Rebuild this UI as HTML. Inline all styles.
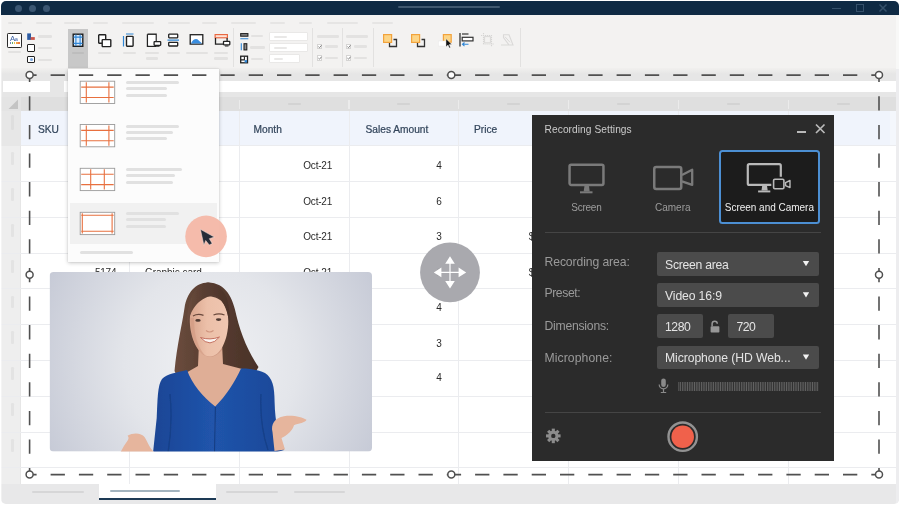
<!DOCTYPE html>
<html lang="en">
<head>
<meta charset="utf-8">
<title>Recording Settings</title>
<style>
*{box-sizing:border-box;margin:0;padding:0}
html,body{width:900px;height:505px;overflow:hidden;background:#fff}
body{font-family:"Liberation Sans",sans-serif;position:relative}
#win{position:absolute;left:1px;top:1px;width:898px;height:503px;border-radius:5px 5px 5px 5px;overflow:hidden;background:#fff;will-change:transform}
svg{overflow:visible}
</style>
</head>
<body>
<div id="win">
<!-- title bar -->
<div style="position:absolute;left:0px;top:0px;width:898px;height:14.3px;background:#0f2a44;"></div>
<div style="position:absolute;left:13.5px;top:3.5px;width:7px;height:7px;background:#3b5672;border-radius:50%"></div>
<div style="position:absolute;left:27.5px;top:3.5px;width:7px;height:7px;background:#3b5672;border-radius:50%"></div>
<div style="position:absolute;left:41.5px;top:3.5px;width:7px;height:7px;background:#3b5672;border-radius:50%"></div>
<div style="position:absolute;left:397px;top:5.3px;width:102px;height:2px;background:#40586f;border-radius:1px"></div>
<div style="position:absolute;left:831px;top:6.5px;width:8.5px;height:1.6px;background:#35506a;"></div>
<div style="position:absolute;left:855px;top:3px;width:8px;height:8px;background:transparent;border:1.5px solid #35506a"></div>
<svg style="position:absolute;left:878px;top:3px;" width="8" height="8" viewBox="0 0 8 8"><path d="M0.5 0.5L7.5 7.5M7.5 0.5L0.5 7.5" stroke="#35506a" stroke-width="1.5" fill="none"/></svg>
<!-- ribbon -->
<div style="position:absolute;left:0px;top:14px;width:898px;height:53.5px;background:#f3f2f1;"></div>
<div style="position:absolute;left:7px;top:21.1px;width:14px;height:2.4px;background:#e6e5e4;border-radius:1.2px"></div>
<div style="position:absolute;left:35px;top:21.1px;width:16px;height:2.4px;background:#e6e5e4;border-radius:1.2px"></div>
<div style="position:absolute;left:63px;top:21.1px;width:16px;height:2.4px;background:#e6e5e4;border-radius:1.2px"></div>
<div style="position:absolute;left:92px;top:21.1px;width:15px;height:2.4px;background:#e6e5e4;border-radius:1.2px"></div>
<div style="position:absolute;left:121px;top:21.1px;width:32px;height:2.4px;background:#e6e5e4;border-radius:1.2px"></div>
<div style="position:absolute;left:167px;top:21.1px;width:22px;height:2.4px;background:#e6e5e4;border-radius:1.2px"></div>
<div style="position:absolute;left:201px;top:21.1px;width:15px;height:2.4px;background:#e6e5e4;border-radius:1.2px"></div>
<div style="position:absolute;left:230px;top:21.1px;width:25px;height:2.4px;background:#e6e5e4;border-radius:1.2px"></div>
<div style="position:absolute;left:269px;top:21.1px;width:15px;height:2.4px;background:#e6e5e4;border-radius:1.2px"></div>
<div style="position:absolute;left:298px;top:21.1px;width:13px;height:2.4px;background:#e6e5e4;border-radius:1.2px"></div>
<div style="position:absolute;left:326px;top:21.1px;width:31px;height:2.4px;background:#e6e5e4;border-radius:1.2px"></div>
<div style="position:absolute;left:371px;top:21.1px;width:21px;height:2.4px;background:#e6e5e4;border-radius:1.2px"></div>
<div style="position:absolute;left:6px;top:32px;width:14.7px;height:14.7px;background:#fff;border:1.3px solid #2a2a2a;border-radius:1.2px"></div>
<div style="position:absolute;left:8.9px;top:32.52px;font-size:7.8px;line-height:9.36px;color:#3a5fa3;white-space:nowrap;letter-spacing:-0.4px">A<span style="font-size:5.6px">a</span></div>
<div style="position:absolute;left:8.5px;top:41.1px;width:1.7px;height:1.5px;background:#6f86b8;"></div>
<div style="position:absolute;left:10.65px;top:41.1px;width:1.7px;height:1.5px;background:#62b06a;"></div>
<div style="position:absolute;left:12.8px;top:41.1px;width:1.7px;height:1.5px;background:#e9c64f;"></div>
<div style="position:absolute;left:14.95px;top:41.1px;width:1.7px;height:1.5px;background:#f0a04b;"></div>
<div style="position:absolute;left:17.1px;top:41.1px;width:1.7px;height:1.5px;background:#e97c45;"></div>
<div style="position:absolute;left:7px;top:49.8px;width:13px;height:2.4px;background:#e3e2e1;border-radius:1.2px"></div>
<svg style="position:absolute;left:26px;top:32px;" width="9" height="8" viewBox="0 0 9 8"><rect x="0.2" y="0.4" width="3.8" height="6.5" fill="#2e5da3"/><rect x="3.7" y="4.1" width="4.1" height="2.8" fill="#c9564b"/></svg>
<div style="position:absolute;left:26.2px;top:43.2px;width:8px;height:8px;background:#fff;border:1.3px solid #222;border-radius:1px"></div>
<div style="position:absolute;left:26.2px;top:54.6px;width:8px;height:7.6px;background:#fff;border:1.3px solid #222;border-radius:1px"></div>
<div style="position:absolute;left:28.6px;top:56.8px;width:3.2px;height:3.2px;background:#7aa7e0;border-radius:50%"></div>
<div style="position:absolute;left:37px;top:34.3px;width:14px;height:2.4px;background:#e3e2e1;border-radius:1.2px"></div>
<div style="position:absolute;left:37px;top:45.8px;width:14px;height:2.4px;background:#e3e2e1;border-radius:1.2px"></div>
<div style="position:absolute;left:37px;top:57.5px;width:14px;height:2.4px;background:#e3e2e1;border-radius:1.2px"></div>
<div style="position:absolute;left:67px;top:28px;width:20px;height:40px;background:#c8c8c8;"></div>
<svg style="position:absolute;left:71px;top:32px;" width="12" height="14" viewBox="0 0 12 14"><g transform="translate(0.5,0.5)"><rect x="0.7" y="0.7" width="9.6" height="12.1" fill="#dbeafa" stroke="#1f1f1f" stroke-width="1.4"/><path d="M3.4 1v11.5M7.6 1v11.5M1 3.6h9M1 9.9h9" stroke="#2f86d6" stroke-width="1.1" fill="none"/></g></svg>
<div style="position:absolute;left:71px;top:50.8px;width:12px;height:2.4px;background:#bdbdbd;border-radius:1.2px"></div>
<svg style="position:absolute;left:97px;top:33px;" width="13.5" height="13.5" viewBox="0 0 13.5 13.5"><rect x="0.7" y="0.7" width="7" height="8.6" fill="#fff" stroke="#222" stroke-width="1.4" rx="0.6"/><rect x="4.2" y="5.6" width="8.6" height="7" fill="#fff" stroke="#222" stroke-width="1.4" rx="0.6"/></svg>
<div style="position:absolute;left:97px;top:50.8px;width:13px;height:2.4px;background:#e3e2e1;border-radius:1.2px"></div>
<svg style="position:absolute;left:121px;top:32px;" width="13" height="14" viewBox="0 0 13 14"><g transform="translate(0.5,0)"><path d="M3.5 1h7.5" stroke="#2f86d6" stroke-width="1.2"/><path d="M1 3v10.5" stroke="#2f86d6" stroke-width="1.2"/><rect x="4" y="3.4" width="6.6" height="9.8" fill="#fff" stroke="#222" stroke-width="1.4" rx="0.6"/></g></svg>
<div style="position:absolute;left:122px;top:50.8px;width:13px;height:2.4px;background:#e3e2e1;border-radius:1.2px"></div>
<svg style="position:absolute;left:145px;top:32px;" width="16" height="15" viewBox="0 0 16 15"><g transform="translate(0.5,0.5)"><path d="M1 0.7h8.6v8M9.6 12.8H1V0.7" fill="#fff" stroke="#222" stroke-width="1.4"/><rect x="1.7" y="1.4" width="7.2" height="10.7" fill="#fff"/><rect x="7.6" y="8.2" width="6.6" height="3.6" fill="#fff" stroke="#222" stroke-width="1.3" rx="0.5"/><path d="M9 12.6h4" stroke="#222" stroke-width="1.2"/></g></svg>
<div style="position:absolute;left:144px;top:50.8px;width:14px;height:2.4px;background:#e3e2e1;border-radius:1.2px"></div>
<div style="position:absolute;left:145px;top:56.3px;width:12px;height:2.4px;background:#e3e2e1;border-radius:1.2px"></div>
<svg style="position:absolute;left:166px;top:32px;" width="12" height="14" viewBox="0 0 12 14"><g transform="translate(0.5,0.5)"><rect x="1.2" y="0.7" width="9" height="3.6" fill="#fff" stroke="#222" stroke-width="1.3" rx="0.5"/><path d="M0 6.6h11.5" stroke="#2f86d6" stroke-width="1.2"/><rect x="1.2" y="8.9" width="9" height="3.6" fill="#fff" stroke="#222" stroke-width="1.3" rx="0.5"/></g></svg>
<div style="position:absolute;left:166px;top:50.8px;width:13px;height:2.4px;background:#e3e2e1;border-radius:1.2px"></div>
<svg style="position:absolute;left:188px;top:33px;" width="15" height="11" viewBox="0 0 15 11"><g transform="translate(0.5,0)"><rect x="0.7" y="0.7" width="12.6" height="9.4" fill="#fff" stroke="#222" stroke-width="1.3"/><path d="M1.4 9.4C3.5 5 7 4 9 6.2C10.5 7.6 11.6 8.2 12.6 9.4Z" fill="#3a8ee0"/></g></svg>
<div style="position:absolute;left:185px;top:50.8px;width:22px;height:2.4px;background:#e3e2e1;border-radius:1.2px"></div>
<svg style="position:absolute;left:213px;top:33px;" width="17" height="14" viewBox="0 0 17 14"><g transform="translate(0.5,0)"><rect x="0.6" y="0.6" width="12.3" height="3.2" fill="#fde3d8" stroke="#e8623a" stroke-width="1.1"/><path d="M1 4v6.2h8" fill="none" stroke="#222" stroke-width="1.3"/><path d="M12.6 4v3" stroke="#222" stroke-width="1.3"/><rect x="9" y="7.4" width="6.3" height="3.4" fill="#fff" stroke="#222" stroke-width="1.3" rx="0.5"/><path d="M10.4 12h3.6" stroke="#222" stroke-width="1.2"/></g></svg>
<div style="position:absolute;left:213px;top:50.8px;width:14px;height:2.4px;background:#e3e2e1;border-radius:1.2px"></div>
<div style="position:absolute;left:213px;top:56.3px;width:14px;height:2.4px;background:#e3e2e1;border-radius:1.2px"></div>
<div style="position:absolute;left:232px;top:27px;width:1px;height:39px;background:#e2e1e0;"></div>
<div style="position:absolute;left:311px;top:27px;width:1px;height:39px;background:#e2e1e0;"></div>
<div style="position:absolute;left:341px;top:27px;width:1px;height:39px;background:#e2e1e0;"></div>
<div style="position:absolute;left:372px;top:27px;width:1px;height:39px;background:#e2e1e0;"></div>
<div style="position:absolute;left:519px;top:27px;width:1px;height:39px;background:#e2e1e0;"></div>
<svg style="position:absolute;left:239px;top:32px;" width="9" height="7" viewBox="0 0 9 7"><rect x="0.7" y="0.6" width="7.2" height="2.6" fill="#8a8a8a" stroke="#222" stroke-width="1.1"/><path d="M0.3 5.8h8" stroke="#2f86d6" stroke-width="1.1"/></svg>
<svg style="position:absolute;left:239px;top:42px;" width="9" height="8" viewBox="0 0 9 8"><path d="M1.3 0.3v7" stroke="#2f86d6" stroke-width="1.1"/><rect x="4" y="0.7" width="2.8" height="6.2" fill="#8a8a8a" stroke="#222" stroke-width="1.1"/></svg>
<svg style="position:absolute;left:239px;top:54px;" width="9" height="9" viewBox="0 0 9 9"><g transform="translate(0,0.5)"><rect x="0.7" y="0.7" width="6.8" height="6.6" fill="#fff" stroke="#222" stroke-width="1.3"/><path d="M1 4.4h3.4V1" stroke="#222" stroke-width="1.1" fill="none"/><rect x="4.6" y="4.6" width="2.5" height="2.4" fill="#2f86d6"/></g></svg>
<div style="position:absolute;left:250px;top:33.8px;width:12px;height:2.4px;background:#e3e2e1;border-radius:1.2px"></div>
<div style="position:absolute;left:249px;top:45.3px;width:15px;height:2.4px;background:#e3e2e1;border-radius:1.2px"></div>
<div style="position:absolute;left:250px;top:56.5px;width:12px;height:2.4px;background:#e3e2e1;border-radius:1.2px"></div>
<div style="position:absolute;left:268.3px;top:31.2px;width:38.3px;height:8.9px;background:#fff;border:1px solid #e9e8e7;border-radius:1px"></div>
<div style="position:absolute;left:272.8px;top:34.95px;width:13px;height:2px;background:#e9e8e7;border-radius:1px"></div>
<div style="position:absolute;left:268.3px;top:41.9px;width:38.3px;height:9.6px;background:#fff;border:1px solid #e9e8e7;border-radius:1px"></div>
<div style="position:absolute;left:272.8px;top:46px;width:13px;height:2px;background:#e9e8e7;border-radius:1px"></div>
<div style="position:absolute;left:268.3px;top:53.3px;width:30.5px;height:9px;background:#fff;border:1px solid #e9e8e7;border-radius:1px"></div>
<div style="position:absolute;left:272.8px;top:57.1px;width:9px;height:2px;background:#e9e8e7;border-radius:1px"></div>
<div style="position:absolute;left:316px;top:34.3px;width:22px;height:2.4px;background:#e3e2e1;border-radius:1.2px"></div>
<div style="position:absolute;left:316px;top:42.8px;width:5.4px;height:5.4px;background:#fff;border:0.8px solid #d5d4d3"></div>
<svg style="position:absolute;left:317px;top:43px;" width="4" height="5" viewBox="0 0 4 5"><g transform="translate(0,0.7)"><path d="M0.4 1.9L1.5 3L3.5 0.6" stroke="#666" stroke-width="0.8" fill="none"/></g></svg>
<div style="position:absolute;left:324px;top:44.3px;width:13px;height:2.4px;background:#e3e2e1;border-radius:1.2px"></div>
<div style="position:absolute;left:316px;top:54.3px;width:5.4px;height:5.4px;background:#fff;border:0.8px solid #d5d4d3"></div>
<svg style="position:absolute;left:317px;top:55px;" width="4" height="5" viewBox="0 0 4 5"><g transform="translate(0,0.2)"><path d="M0.4 1.9L1.5 3L3.5 0.6" stroke="#666" stroke-width="0.8" fill="none"/></g></svg>
<div style="position:absolute;left:324px;top:55.8px;width:13px;height:2.4px;background:#e3e2e1;border-radius:1.2px"></div>
<div style="position:absolute;left:345px;top:34.3px;width:22px;height:2.4px;background:#e3e2e1;border-radius:1.2px"></div>
<div style="position:absolute;left:345px;top:42.8px;width:5.4px;height:5.4px;background:#fff;border:0.8px solid #d5d4d3"></div>
<svg style="position:absolute;left:346px;top:43px;" width="4" height="5" viewBox="0 0 4 5"><g transform="translate(0,0.7)"><path d="M0.4 1.9L1.5 3L3.5 0.6" stroke="#666" stroke-width="0.8" fill="none"/></g></svg>
<div style="position:absolute;left:353px;top:44.3px;width:13px;height:2.4px;background:#e3e2e1;border-radius:1.2px"></div>
<div style="position:absolute;left:345px;top:54.3px;width:5.4px;height:5.4px;background:#fff;border:0.8px solid #d5d4d3"></div>
<svg style="position:absolute;left:346px;top:55px;" width="4" height="5" viewBox="0 0 4 5"><g transform="translate(0,0.2)"><path d="M0.4 1.9L1.5 3L3.5 0.6" stroke="#666" stroke-width="0.8" fill="none"/></g></svg>
<div style="position:absolute;left:353px;top:55.8px;width:13px;height:2.4px;background:#e3e2e1;border-radius:1.2px"></div>
<svg style="position:absolute;left:382px;top:33px;" width="14.5" height="13.5" viewBox="0 0 14.5 13.5"><path d="M6.5 7.5v5h7v-7h-3" fill="none" stroke="#333" stroke-width="1.3"/><rect x="0.6" y="0.6" width="8" height="7.8" fill="#fcd587" stroke="#f2a33c" stroke-width="1.2"/></svg>
<svg style="position:absolute;left:410px;top:33px;" width="14.5" height="13.5" viewBox="0 0 14.5 13.5"><path d="M6.5 7.5v5h7v-7h-3" fill="none" stroke="#333" stroke-width="1.3"/><rect x="0.6" y="0.6" width="8" height="7.8" fill="#fcd587" stroke="#f2a33c" stroke-width="1.2"/></svg>
<svg style="position:absolute;left:437px;top:33px;" width="15" height="14" viewBox="0 0 15 14"><rect x="5.4" y="0.6" width="7.8" height="7.6" fill="#fcd587" stroke="#f2a33c" stroke-width="1.2"/><rect x="0.3" y="7" width="7.5" height="5" fill="#fff" stroke="#e8e8e8" stroke-width="0.5"/><path d="M8 4.8v8l2-1.8l1.3 3l1.2-0.5l-1.3-2.9l2.6-0.2Z" fill="#111" stroke="#fff" stroke-width="0.4"/></svg>
<svg style="position:absolute;left:458px;top:32px;" width="15" height="14" viewBox="0 0 15 14"><path d="M1 0v13.5" stroke="#333" stroke-width="1.3"/><path d="M3 1h6.5" stroke="#333" stroke-width="1.2"/><rect x="3.2" y="4.3" width="10.8" height="3.6" fill="#fff" stroke="#333" stroke-width="1.2"/><path d="M9.5 11.3h-6m2-1.8l-2 1.8l2 1.8" stroke="#2f86d6" stroke-width="1.1" fill="none"/></svg>
<svg style="position:absolute;left:480px;top:32px;" width="13" height="14" viewBox="0 0 13 14"><path d="M2.5 0v11h10.5M0 2.5h10.5v11" stroke="#d6d5d4" stroke-width="1.1" fill="none" stroke-dasharray="1.2 0.8"/><rect x="3.6" y="3.6" width="5.8" height="6.2" fill="none" stroke="#dad9d8" stroke-width="1"/></svg>
<svg style="position:absolute;left:499px;top:33px;" width="14" height="12" viewBox="0 0 14 12"><path d="M1 11h8L3.5 3.5V0.8h5.5l4 10.2H9" stroke="#dad9d8" stroke-width="1.1" fill="none"/><path d="M5 2.8l5 5.5" stroke="#dad9d8" stroke-width="1"/></svg>
<!-- formula bar / headers -->
<div style="position:absolute;left:0px;top:66.8px;width:898px;height:29.2px;background:#e7e7e7;background:linear-gradient(#f1f0ef 0,#e6e6e6 6px,#e6e6e6 100%)"></div>
<div style="position:absolute;left:2px;top:80px;width:47px;height:10.7px;background:#fff;"></div>
<div style="position:absolute;left:63px;top:80px;width:832px;height:10.7px;background:#fff;"></div>
<div style="position:absolute;left:0px;top:95.5px;width:898px;height:14px;background:#dfdfdf;"></div>
<div style="position:absolute;left:0px;top:95.5px;width:19.5px;height:14px;background:#e4e4e4;"></div>
<svg style="position:absolute;left:7px;top:98px;" width="11" height="10" viewBox="0 0 11 10"><g transform="translate(0.5,0.5)"><path d="M9.5 0V9.5H0Z" fill="#c4c4c4"/></g></svg>
<div style="position:absolute;left:67px;top:102.2px;width:13px;height:1.6px;background:#d3d3d3;border-radius:0.8px"></div>
<div style="position:absolute;left:127.9px;top:98.5px;width:1.2px;height:9px;background:#ebebeb;"></div>
<div style="position:absolute;left:176.5px;top:102.2px;width:13px;height:1.6px;background:#d3d3d3;border-radius:0.8px"></div>
<div style="position:absolute;left:237.9px;top:98.5px;width:1.2px;height:9px;background:#ebebeb;"></div>
<div style="position:absolute;left:286.5px;top:102.2px;width:13px;height:1.6px;background:#d3d3d3;border-radius:0.8px"></div>
<div style="position:absolute;left:347.4px;top:98.5px;width:1.2px;height:9px;background:#ebebeb;"></div>
<div style="position:absolute;left:396px;top:102.2px;width:13px;height:1.6px;background:#d3d3d3;border-radius:0.8px"></div>
<div style="position:absolute;left:457.1px;top:98.5px;width:1.2px;height:9px;background:#ebebeb;"></div>
<div style="position:absolute;left:505.7px;top:102.2px;width:13px;height:1.6px;background:#d3d3d3;border-radius:0.8px"></div>
<div style="position:absolute;left:566.9px;top:98.5px;width:1.2px;height:9px;background:#ebebeb;"></div>
<div style="position:absolute;left:615.5px;top:102.2px;width:13px;height:1.6px;background:#d3d3d3;border-radius:0.8px"></div>
<div style="position:absolute;left:676.9px;top:98.5px;width:1.2px;height:9px;background:#ebebeb;"></div>
<div style="position:absolute;left:725.5px;top:102.2px;width:13px;height:1.6px;background:#d3d3d3;border-radius:0.8px"></div>
<div style="position:absolute;left:786.9px;top:98.5px;width:1.2px;height:9px;background:#ebebeb;"></div>
<div style="position:absolute;left:835.5px;top:102.2px;width:13px;height:1.6px;background:#d3d3d3;border-radius:0.8px"></div>
<!-- sheet -->
<div style="position:absolute;left:0px;top:109.5px;width:19.5px;height:373.5px;background:#eeeeee;"></div>
<div style="position:absolute;left:19.5px;top:109.5px;width:869px;height:35px;background:#f0f4fc;"></div>
<div style="position:absolute;left:888.5px;top:109.5px;width:7px;height:35px;background:#f4f7fc;"></div>
<div style="position:absolute;left:128px;top:109.5px;width:1px;height:373.5px;background:#ebecef;"></div>
<div style="position:absolute;left:238px;top:109.5px;width:1px;height:373.5px;background:#ebecef;"></div>
<div style="position:absolute;left:347.5px;top:109.5px;width:1px;height:373.5px;background:#ebecef;"></div>
<div style="position:absolute;left:457.2px;top:109.5px;width:1px;height:373.5px;background:#ebecef;"></div>
<div style="position:absolute;left:567px;top:109.5px;width:1px;height:373.5px;background:#ebecef;"></div>
<div style="position:absolute;left:677px;top:109.5px;width:1px;height:373.5px;background:#ebecef;"></div>
<div style="position:absolute;left:787px;top:109.5px;width:1px;height:373.5px;background:#ebecef;"></div>
<div style="position:absolute;left:19px;top:109.5px;width:1px;height:373.5px;background:#e6e6e6;"></div>
<div style="position:absolute;left:0px;top:144.1px;width:896px;height:1px;background:#ebecef;"></div>
<div style="position:absolute;left:0px;top:179.9px;width:896px;height:1px;background:#ebecef;"></div>
<div style="position:absolute;left:0px;top:215.7px;width:896px;height:1px;background:#ebecef;"></div>
<div style="position:absolute;left:0px;top:251.5px;width:896px;height:1px;background:#ebecef;"></div>
<div style="position:absolute;left:0px;top:287.3px;width:896px;height:1px;background:#ebecef;"></div>
<div style="position:absolute;left:0px;top:323.1px;width:896px;height:1px;background:#ebecef;"></div>
<div style="position:absolute;left:0px;top:358.9px;width:896px;height:1px;background:#ebecef;"></div>
<div style="position:absolute;left:0px;top:394.7px;width:896px;height:1px;background:#ebecef;"></div>
<div style="position:absolute;left:0px;top:430.5px;width:896px;height:1px;background:#ebecef;"></div>
<div style="position:absolute;left:0px;top:466.3px;width:896px;height:1px;background:#ebecef;"></div>
<div style="position:absolute;left:0px;top:109.5px;width:19.5px;height:35px;background:#e7e7e7;"></div>
<div style="position:absolute;left:10.2px;top:114px;width:2.4px;height:15px;background:#dedede;border-radius:1.2px"></div>
<div style="position:absolute;left:10.2px;top:151.4px;width:2.4px;height:12.8px;background:#e3e3e3;border-radius:1.2px"></div>
<div style="position:absolute;left:10.2px;top:187.2px;width:2.4px;height:12.8px;background:#e3e3e3;border-radius:1.2px"></div>
<div style="position:absolute;left:10.2px;top:223px;width:2.4px;height:12.8px;background:#e3e3e3;border-radius:1.2px"></div>
<div style="position:absolute;left:10.2px;top:258.8px;width:2.4px;height:12.8px;background:#e3e3e3;border-radius:1.2px"></div>
<div style="position:absolute;left:10.2px;top:294.6px;width:2.4px;height:12.8px;background:#e3e3e3;border-radius:1.2px"></div>
<div style="position:absolute;left:10.2px;top:330.4px;width:2.4px;height:12.8px;background:#e3e3e3;border-radius:1.2px"></div>
<div style="position:absolute;left:10.2px;top:366.2px;width:2.4px;height:12.8px;background:#e3e3e3;border-radius:1.2px"></div>
<div style="position:absolute;left:10.2px;top:402px;width:2.4px;height:12.8px;background:#e3e3e3;border-radius:1.2px"></div>
<div style="position:absolute;left:10.2px;top:437.8px;width:2.4px;height:12.8px;background:#e3e3e3;border-radius:1.2px"></div>
<div style="position:absolute;left:37px;top:123.28px;font-size:10.2px;line-height:12.24px;color:#34465c;-webkit-text-stroke:0.22px #34465c;white-space:nowrap;">SKU</div>
<div style="position:absolute;left:252.5px;top:123.28px;font-size:10.2px;line-height:12.24px;color:#34465c;-webkit-text-stroke:0.22px #34465c;white-space:nowrap;">Month</div>
<div style="position:absolute;left:364.5px;top:123.28px;font-size:10.2px;line-height:12.24px;color:#34465c;-webkit-text-stroke:0.22px #34465c;white-space:nowrap;">Sales Amount</div>
<div style="position:absolute;left:473px;top:123.28px;font-size:10.2px;line-height:12.24px;color:#34465c;-webkit-text-stroke:0.22px #34465c;white-space:nowrap;">Price</div>
<div style="position:absolute;right:567px;top:158.9px;font-size:10px;line-height:12px;color:#2a2a2a;letter-spacing:-0.22px;white-space:nowrap;">Oct-21</div>
<div style="position:absolute;right:567px;top:194.5px;font-size:10px;line-height:12px;color:#2a2a2a;letter-spacing:-0.22px;white-space:nowrap;">Oct-21</div>
<div style="position:absolute;right:567px;top:230.1px;font-size:10px;line-height:12px;color:#2a2a2a;letter-spacing:-0.22px;white-space:nowrap;">Oct-21</div>
<div style="position:absolute;right:567px;top:265.6px;font-size:10px;line-height:12px;color:#2a2a2a;letter-spacing:-0.22px;white-space:nowrap;">Oct-21</div>
<div style="position:absolute;right:457.5px;top:158.9px;font-size:10px;line-height:12px;color:#2a2a2a;letter-spacing:-0.22px;white-space:nowrap;">4</div>
<div style="position:absolute;right:457.5px;top:194.5px;font-size:10px;line-height:12px;color:#2a2a2a;letter-spacing:-0.22px;white-space:nowrap;">6</div>
<div style="position:absolute;right:457.5px;top:230.1px;font-size:10px;line-height:12px;color:#2a2a2a;letter-spacing:-0.22px;white-space:nowrap;">3</div>
<div style="position:absolute;right:457.5px;top:265.6px;font-size:10px;line-height:12px;color:#2a2a2a;letter-spacing:-0.22px;white-space:nowrap;">2</div>
<div style="position:absolute;right:457.5px;top:300.9px;font-size:10px;line-height:12px;color:#2a2a2a;letter-spacing:-0.22px;white-space:nowrap;">4</div>
<div style="position:absolute;right:457.5px;top:336.6px;font-size:10px;line-height:12px;color:#2a2a2a;letter-spacing:-0.22px;white-space:nowrap;">3</div>
<div style="position:absolute;right:457.5px;top:371.4px;font-size:10px;line-height:12px;color:#2a2a2a;letter-spacing:-0.22px;white-space:nowrap;">4</div>
<div style="position:absolute;right:349px;top:230.1px;font-size:10px;line-height:12px;color:#2a2a2a;letter-spacing:-0.22px;white-space:nowrap;">$120</div>
<div style="position:absolute;right:349px;top:265.6px;font-size:10px;line-height:12px;color:#2a2a2a;letter-spacing:-0.22px;white-space:nowrap;">$340</div>
<div style="position:absolute;right:782.7px;top:265.6px;font-size:10px;line-height:12px;color:#2a2a2a;letter-spacing:-0.22px;white-space:nowrap;">5174</div>
<div style="position:absolute;left:144px;top:265.6px;font-size:10px;line-height:12px;color:#2a2a2a;letter-spacing:-0.04px;white-space:nowrap;">Graphic card</div>
<!-- tabs -->
<div style="position:absolute;left:0px;top:483px;width:898px;height:20px;background:#e8e8e9;"></div>
<div style="position:absolute;left:895.4px;top:14.5px;width:2.6px;height:53px;background:#f8f8f7;"></div>
<div style="position:absolute;left:895.4px;top:67.5px;width:2.6px;height:436px;background:#ededef;"></div>
<div style="position:absolute;left:0px;top:14.5px;width:1.2px;height:489px;background:rgba(255,255,255,0.35);"></div>
<div style="position:absolute;left:98.3px;top:483px;width:116.7px;height:15.8px;background:#fff;border-bottom:2px solid #1d3a55"></div>
<div style="position:absolute;left:109px;top:489.4px;width:70px;height:2px;background:#a3b4bf;border-radius:1px"></div>
<div style="position:absolute;left:31px;top:489.6px;width:52px;height:2px;background:#d6d6d7;border-radius:1px"></div>
<div style="position:absolute;left:225px;top:489.6px;width:52px;height:2px;background:#d6d6d7;border-radius:1px"></div>
<div style="position:absolute;left:293px;top:489.6px;width:51px;height:2px;background:#d6d6d7;border-radius:1px"></div>
<!-- dropdown -->
<div style="position:absolute;left:67.3px;top:67.8px;width:151.2px;height:193px;background:#fcfcfc;box-shadow:0 1px 4px rgba(0,0,0,0.22),0 0 1px rgba(0,0,0,0.15)"></div>
<div style="position:absolute;left:69.4px;top:201.5px;width:147px;height:41.3px;background:#f1f1f1;"></div>
<svg style="position:absolute;left:78px;top:79px;" width="37" height="24" viewBox="0 0 37 24"><g transform="translate(0.7,0.7)"><rect x="0.5" y="0.5" width="34.5" height="22.3" fill="#fff" stroke="#9a9a9a" stroke-width="0.9"/><path d="M6.6 1.5V21.8M29.2 1.5V21.8M1.5 6.4H34M1.5 16.8H34" stroke="#e8703f" stroke-width="1.1" fill="none"/></g></svg>
<svg style="position:absolute;left:78px;top:123px;" width="37" height="24" viewBox="0 0 37 24"><g transform="translate(0.7,0)"><rect x="0.5" y="0.5" width="34.5" height="22.3" fill="#fff" stroke="#9a9a9a" stroke-width="0.9"/><path d="M6.6 1.5V21.8M29.2 1.5V21.8M1.5 6.4H34M1.5 16.8H34" stroke="#e8703f" stroke-width="1.1" fill="none"/></g></svg>
<svg style="position:absolute;left:78px;top:166px;" width="37" height="25" viewBox="0 0 37 25"><g transform="translate(0.7,0.8)"><rect x="0.5" y="0.5" width="34.5" height="22.3" fill="#fff" stroke="#9a9a9a" stroke-width="0.9"/><path d="M11 1.5V21.8M24.6 1.5V21.8M1.5 6.4H34M1.5 16.8H34" stroke="#e8703f" stroke-width="1.1" fill="none"/></g></svg>
<svg style="position:absolute;left:78px;top:210px;" width="37" height="25" viewBox="0 0 37 25"><g transform="translate(0.7,0.8)"><rect x="0.5" y="0.5" width="34.5" height="22.3" fill="#fff" stroke="#9a9a9a" stroke-width="0.9"/><path d="M2.6 1.5V21.8M32.4 1.5V21.8M1.5 3.4H34M1.5 19.4H34" stroke="#e8703f" stroke-width="1.1" fill="none"/></g></svg>
<div style="position:absolute;left:125px;top:79.8px;width:53px;height:3px;background:#e1e1e1;border-radius:1.5px"></div>
<div style="position:absolute;left:125px;top:86.2px;width:41px;height:3px;background:#e1e1e1;border-radius:1.5px"></div>
<div style="position:absolute;left:125px;top:92.6px;width:41px;height:3px;background:#e1e1e1;border-radius:1.5px"></div>
<div style="position:absolute;left:125px;top:123.5px;width:53px;height:3px;background:#e1e1e1;border-radius:1.5px"></div>
<div style="position:absolute;left:125px;top:129.9px;width:47px;height:3px;background:#e1e1e1;border-radius:1.5px"></div>
<div style="position:absolute;left:125px;top:136.3px;width:41px;height:3px;background:#e1e1e1;border-radius:1.5px"></div>
<div style="position:absolute;left:125px;top:167px;width:55.5px;height:3px;background:#e1e1e1;border-radius:1.5px"></div>
<div style="position:absolute;left:125px;top:173.4px;width:48.5px;height:3px;background:#e1e1e1;border-radius:1.5px"></div>
<div style="position:absolute;left:125px;top:179.8px;width:47px;height:3px;background:#e1e1e1;border-radius:1.5px"></div>
<div style="position:absolute;left:125px;top:210.8px;width:53px;height:3px;background:#e1e1e1;border-radius:1.5px"></div>
<div style="position:absolute;left:125px;top:217.2px;width:40px;height:3px;background:#e1e1e1;border-radius:1.5px"></div>
<div style="position:absolute;left:125px;top:223.6px;width:40px;height:3px;background:#e1e1e1;border-radius:1.5px"></div>
<div style="position:absolute;left:79px;top:250.2px;width:53px;height:3px;background:#e1e1e1;border-radius:1.5px"></div>
<!-- webcam -->
<svg style="position:absolute;left:48px;top:271px;" width="323" height="180" viewBox="0 0 323 180"><g transform="translate(0.6,0)"><defs><radialGradient id="wbg" cx="0.5" cy="0.5" r="0.6" gradientTransform="translate(0 -0.45) scale(1 1.9)"><stop offset="0" stop-color="#f0f1f4"/><stop offset="0.45" stop-color="#e3e5ea"/><stop offset="1" stop-color="#c3c7d4"/></radialGradient><linearGradient id="shirt" x1="0" x2="1"><stop offset="0" stop-color="#1a4595"/><stop offset="0.45" stop-color="#2054ab"/><stop offset="1" stop-color="#1b4898"/></linearGradient><linearGradient id="hair" x1="0" x2="1"><stop offset="0" stop-color="#6b4c3d"/><stop offset="0.35" stop-color="#5a3f33"/><stop offset="1" stop-color="#4a3228"/></linearGradient><linearGradient id="skin" x1="0" x2="1"><stop offset="0" stop-color="#d9a58d"/><stop offset="0.45" stop-color="#ecc0a9"/><stop offset="1" stop-color="#efc6b0"/></linearGradient><filter id="soft" x="-5%" y="-5%" width="110%" height="110%"><feGaussianBlur stdDeviation="0.45"/></filter><clipPath id="wclip"><rect x="0" y="0" width="322.4" height="179.6" rx="4"/></clipPath></defs><g clip-path="url(#wclip)"><rect width="322.4" height="179.6" fill="url(#wbg)"/><g filter="url(#soft)"><path d="M158.4 10.6C145.4 11.0 137.4 21.0 134.9 36.0C131.9 56.0 127.4 73.0 124.9 99.0L130.4 110.0L200.4 110.0L208.9 95.0C199.4 81.0 191.4 63.0 186.9 44.0C183.4 26.0 176.4 11.0 158.4 10.6Z" fill="url(#hair)"/><path d="M149.4 71.0L148.4 94.0L134.4 102.0L166.4 140.0L196.4 98.0L173.4 92.0L172.4 71.0Z" fill="#dfae96"/><path d="M149.4 78.0Q160.4 92.0 172.4 78.0L172.4 71.0L149.4 71.0Z" fill="#cf9a83"/><path d="M159.4 24.5C146.4 24.5 139.9 34.0 140.2 50.0C140.9 68.0 149.4 84.5 160.4 84.5C170.4 84.5 178.7 68.0 178.7 49.0C178.7 34.0 171.4 24.5 159.4 24.5Z" fill="url(#skin)"/><path d="M140.9 46.0C140.9 66.0 147.4 80.0 155.4 83.5C147.4 74.0 144.4 62.0 144.4 46.0Z" fill="#cf9780" opacity="0.55"/><path d="M158.4 10.6C144.4 13.0 137.9 28.0 137.4 54.0C140.9 38.0 147.4 27.0 163.9 23.0C171.4 25.0 177.4 34.0 179.9 52.0C181.4 28.0 174.4 12.0 158.4 10.6Z" fill="url(#hair)"/><ellipse cx="148.4" cy="48.39999999999998" rx="2.7" ry="1.4" fill="#4f3a33"/><ellipse cx="169.0" cy="47.60000000000002" rx="2.7" ry="1.4" fill="#4f3a33"/><path d="M143.4 44.0Q148.4 41.2 153.9 43.4M163.9 43.0Q169.4 40.6 174.9 43.0" stroke="#6b4a3c" stroke-width="1.3" fill="none"/><path d="M150.9 65.5Q160.4 76.5 169.9 65.0Q160.4 68.5 150.9 65.5Z" fill="#fbf3ef" stroke="#c4705f" stroke-width="1"/><path d="M156.4 58.5Q159.9 61.5 163.9 58.5" stroke="#cf957f" stroke-width="1.1" fill="none"/><path d="M137.4 98.0C126.4 100.5 117.4 102.0 112.4 107.0C107.9 113.0 108.0 128.0 107.1 146.0L103.4 181.0L224.4 181.0L234.4 178.0C229.4 168.0 225.4 150.0 225.0 130.0C224.9 114.0 222.9 106.0 215.4 101.0C207.4 97.5 198.4 96.5 191.4 96.6C185.4 110.0 176.4 124.0 165.6 134.5C153.4 125.0 142.4 112.0 137.4 98.0Z" fill="url(#shirt)"/><path d="M165.8 135.0L164.9 181.0" stroke="#163c80" stroke-width="1"/><path d="M120.4 122.0C122.4 143.0 121.4 163.0 118.4 181.0M211.4 122.0C210.4 143.0 212.4 160.0 218.4 178.0" stroke="#163d84" stroke-width="1.4" fill="none" opacity="0.8"/><path d="M222.9 160.0C220.9 152.0 225.4 145.5 234.4 144.2C243.4 142.8 252.4 145.0 256.9 147.8C256.4 150.8 248.4 151.3 244.4 153.3C242.9 159.0 237.4 163.5 231.9 166.0L235.4 177.5L224.9 179.0Z" fill="#e6b59d"/><path d="M72.4 177.5C75.4 171.0 81.4 166.5 77.9 163.7C83.9 160.3 91.9 161.0 94.9 165.0C98.4 170.0 99.4 176.0 105.4 181.0L70.4 181.0Z" fill="#e6b59d"/></g></g></g></svg>
<!-- move handle + click highlight -->
<svg style="position:absolute;left:419px;top:241px;" width="60" height="61" viewBox="0 0 60 61"><g transform="translate(0,0.4)"><circle cx="30" cy="30" r="29.9" fill="#a6a6ab" fill-opacity="0.96"/><g fill="#fff" transform="translate(30,30)"><g transform="rotate(0)"><path d="M0 -16.2L-4.8 -8.6H-0.6V0H0.6V-8.6H4.8Z"/></g><g transform="rotate(90)"><path d="M0 -16.2L-4.8 -8.6H-0.6V0H0.6V-8.6H4.8Z"/></g><g transform="rotate(180)"><path d="M0 -16.2L-4.8 -8.6H-0.6V0H0.6V-8.6H4.8Z"/></g><g transform="rotate(270)"><path d="M0 -16.2L-4.8 -8.6H-0.6V0H0.6V-8.6H4.8Z"/></g></g></g></svg>
<svg style="position:absolute;left:184px;top:214px;" width="42" height="42" viewBox="0 0 42 42"><circle cx="21.06" cy="21.4" r="20.8" fill="#f4b7a6" fill-opacity="0.95"/><path d="M15.4 14.3L18.9 30.2L20.7 25.5L24.3 30L27.2 28.4L24.3 23.7L29.3 22.1Z" fill="#262c38" stroke="#fbe9e2" stroke-width="0.5" stroke-linejoin="round"/></svg>
<!-- recording settings panel -->
<div style="position:absolute;left:531px;top:113px;width:301.6px;height:347px;background:transparent;font-family:'Liberation Sans',sans-serif"><div style="position:absolute;left:0px;top:0.7px;width:301.6px;height:346.3px;background:#2b2b2b;"></div><div style="position:absolute;left:12.6px;top:10px;font-size:10.2px;line-height:12.24px;color:#cbcbcb;white-space:nowrap;letter-spacing:0.06px">Recording Settings</div><div style="position:absolute;left:265px;top:17.2px;width:9px;height:1.6px;background:#b9b9b9;"></div><svg style="position:absolute;left:283px;top:9px" width="11" height="11" viewBox="0 0 11 11"><g transform="translate(0,0.5)"><path d="M1 1L9.5 9.500M9.5 1L1 9.5" stroke="#b9b9b9" stroke-width="1.7" fill="none"/></g></svg><svg style="position:absolute;left:35px;top:47px" width="39" height="34" viewBox="0 0 39 34"><g transform="translate(0,0.4)"><rect x="2.55" y="3.35" width="33.9" height="20.2" rx="1.6" fill="none" stroke="#7a7a7a" stroke-width="2.5"/><path d="M17.5 24h4.4l0.8 6h-6z" fill="#7a7a7a"/><rect x="13" y="29.9" width="12.5" height="2" fill="#7a7a7a"/></g></svg><div style="position:absolute;left:39.3px;top:88px;font-size:10px;line-height:12px;color:#9c9c9c;white-space:nowrap;letter-spacing:-0.25px">Screen</div><svg style="position:absolute;left:121px;top:51px" width="41" height="26" viewBox="0 0 41 26"><rect x="1.25" y="1.95" width="27" height="22" rx="2" fill="none" stroke="#7a7a7a" stroke-width="2.5"/><path d="M29 10L39.2 4.800V19.900L29 16.3" fill="none" stroke="#7a7a7a" stroke-width="2.3" stroke-linejoin="round"/></svg><div style="position:absolute;left:123px;top:88px;font-size:10px;line-height:12px;color:#9c9c9c;white-space:nowrap;">Camera</div><div style="position:absolute;left:186.5px;top:36px;width:101.5px;height:73.9px;background:#1c1c1c;border:2px solid #4c8fd3;border-radius:3.5px"></div><svg style="position:absolute;left:213px;top:48px" width="47" height="33" viewBox="0 0 47 33"><g transform="translate(0.8,0.2)"><path d="M25.5 22.7H3.5a1.5 1.5 0 0 1-1.5-1.5V3.5A1.5 1.5 0 0 1 3.5 2H33.5a1.5 1.5 0 0 1 1.5 1.5V14.5" fill="none" stroke="#b9b9b9" stroke-width="2.2"/><path d="M16.4 23.5h4.8l0.7 4.9h-6.200z" fill="#b9b9b9"/><rect x="12.3" y="28.3" width="12.2" height="1.9" fill="#b9b9b9"/><rect x="27.8" y="17" width="10.3" height="9.5" rx="1.2" fill="none" stroke="#b9b9b9" stroke-width="1.6"/><path d="M39.8 20.400L44.2 18.300V25.400L39.8 23.400z" fill="none" stroke="#b9b9b9" stroke-width="1.4" stroke-linejoin="round"/></g></svg><div style="position:absolute;left:192.8px;top:88px;font-size:10px;line-height:12px;color:#f0f0f0;white-space:nowrap;letter-spacing:-0.02px">Screen and Camera</div><div style="position:absolute;left:13px;top:117.8px;width:276px;height:1px;background:#454545;"></div><div style="position:absolute;left:13px;top:297.8px;width:276px;height:1px;background:#454545;"></div><div style="position:absolute;left:12.5px;top:141px;font-size:12.2px;line-height:14.64px;color:#9a9a9a;white-space:nowrap;letter-spacing:-0.1px">Recording area:</div><div style="position:absolute;left:12.5px;top:172px;font-size:12.2px;line-height:14.64px;color:#9a9a9a;white-space:nowrap;letter-spacing:-0.42px">Preset:</div><div style="position:absolute;left:12.5px;top:205px;font-size:12.2px;line-height:14.64px;color:#9a9a9a;white-space:nowrap;letter-spacing:-0.24px">Dimensions:</div><div style="position:absolute;left:12.5px;top:237px;font-size:12.2px;line-height:14.64px;color:#9a9a9a;white-space:nowrap;letter-spacing:0.09px">Microphone:</div><div style="position:absolute;left:124.8px;top:138px;width:162.2px;height:23.8px;background:#4b4b4b;border-radius:2px"></div><div style="position:absolute;left:133px;top:144px;font-size:12.2px;line-height:14.64px;color:#e4e4e4;white-space:nowrap;letter-spacing:-0.25px">Screen area</div><svg style="position:absolute;left:270px;top:146px" width="8" height="7" viewBox="0 0 8 7"><g transform="translate(0.5,0.6)"><path d="M0.3 0.5H6.7L3.5 5.6Z" fill="#f2f2f2"/></g></svg><div style="position:absolute;left:124.8px;top:169.2px;width:162.2px;height:23.8px;background:#4b4b4b;border-radius:2px"></div><div style="position:absolute;left:133px;top:175px;font-size:12.2px;line-height:14.64px;color:#e4e4e4;white-space:nowrap;letter-spacing:-0.12px">Video 16:9</div><svg style="position:absolute;left:270px;top:177px" width="8" height="7" viewBox="0 0 8 7"><g transform="translate(0.5,0.8)"><path d="M0.3 0.5H6.7L3.5 5.6Z" fill="#f2f2f2"/></g></svg><div style="position:absolute;left:124.8px;top:231.5px;width:162.2px;height:23.8px;background:#4b4b4b;border-radius:2px"></div><div style="position:absolute;left:133px;top:237px;font-size:12.2px;line-height:14.64px;color:#e4e4e4;white-space:nowrap;letter-spacing:-0.076px">Microphone (HD Web...</div><svg style="position:absolute;left:270px;top:240px" width="8" height="7" viewBox="0 0 8 7"><g transform="translate(0.5,0.1)"><path d="M0.3 0.5H6.7L3.5 5.6Z" fill="#f2f2f2"/></g></svg><div style="position:absolute;left:124.8px;top:200.3px;width:45.8px;height:23.9px;background:#4b4b4b;border-radius:2px"></div><div style="position:absolute;left:133px;top:206px;font-size:12.2px;line-height:14.64px;color:#e4e4e4;white-space:nowrap;letter-spacing:-0.44px">1280</div><div style="position:absolute;left:196.3px;top:200.3px;width:45.5px;height:23.9px;background:#4b4b4b;border-radius:2px"></div><div style="position:absolute;left:204.5px;top:206px;font-size:12.2px;line-height:14.64px;color:#e4e4e4;white-space:nowrap;letter-spacing:-0.57px">720</div><svg style="position:absolute;left:177px;top:206px" width="12" height="14" viewBox="0 0 12 14"><g transform="translate(0.6,0.2)"><path d="M2.5 6V3.600a2.6 2.6 0 0 1 5.2 0" fill="none" stroke="#979797" stroke-width="1.5"/><rect x="1" y="6" width="8.8" height="6.3" rx="0.8" fill="#979797"/></g></svg><svg style="position:absolute;left:126px;top:264px" width="11" height="16" viewBox="0 0 11 16"><rect x="3.2" y="0.5" width="4.6" height="8.5" rx="2.3" fill="#8a8a8a"/><path d="M1.2 6.500a4.3 4.3 0 0 0 8.6 0" fill="none" stroke="#8a8a8a" stroke-width="1.2"/><path d="M5.5 11v3M2.8 14.500h5.4" stroke="#8a8a8a" stroke-width="1.2"/></svg><div style="position:absolute;left:145.7px;top:268px;width:141.3px;height:8.8px;background:transparent;background-image:repeating-linear-gradient(90deg,#636363 0,#2f2f2f 1.18px,#636363 2.36px)"></div><svg style="position:absolute;left:13px;top:313px" width="17" height="17" viewBox="0 0 17 17"><g transform="translate(0.3,0.9)"><g transform="translate(8,8) scale(0.91)"><g fill="#8c8c8c"><rect x="-1.7" y="-8" width="3.4" height="4" transform="rotate(0)"/><rect x="-1.7" y="-8" width="3.4" height="4" transform="rotate(45)"/><rect x="-1.7" y="-8" width="3.4" height="4" transform="rotate(90)"/><rect x="-1.7" y="-8" width="3.4" height="4" transform="rotate(135)"/><rect x="-1.7" y="-8" width="3.4" height="4" transform="rotate(180)"/><rect x="-1.7" y="-8" width="3.4" height="4" transform="rotate(225)"/><rect x="-1.7" y="-8" width="3.4" height="4" transform="rotate(270)"/><rect x="-1.7" y="-8" width="3.4" height="4" transform="rotate(315)"/><circle r="5.6"/></g><circle r="2.4" fill="#2b2b2b"/></g></g></svg><svg style="position:absolute;left:135px;top:307px" width="31.5" height="31.5" viewBox="0 0 31.5 31.5"><circle cx="15.7" cy="15.7" r="14.2" fill="#2b2b2b" stroke="#929292" stroke-width="2.4"/><circle cx="15.7" cy="15.7" r="11.3" fill="#f0614b"/></svg></div>
<!-- selection frame -->
<svg style="position:absolute;left:0px;top:0px;" width="898" height="503" viewBox="0 0 898 503"><g transform="translate(-1,-1)"><g stroke="#505050" stroke-width="1.6" fill="none"><path d="M29.6 75.1H879" stroke-dasharray="14.3 14" stroke-dashoffset="7.3"/><path d="M29.6 474.6H879" stroke-dasharray="14.3 14" stroke-dashoffset="7.3"/><path d="M29.6 75.1V474.6" stroke-dasharray="14.3 14.3" stroke-dashoffset="7.4"/><path d="M879 75.1V474.6" stroke-dasharray="14.3 14.3" stroke-dashoffset="7.4"/></g><circle cx="29.6" cy="75.1" r="3.5" fill="#fff" stroke="#505050" stroke-width="1.5"/><circle cx="451.3" cy="75.1" r="3.5" fill="#fff" stroke="#505050" stroke-width="1.5"/><circle cx="879" cy="75.1" r="3.5" fill="#fff" stroke="#505050" stroke-width="1.5"/><circle cx="29.6" cy="274.8" r="3.5" fill="#fff" stroke="#505050" stroke-width="1.5"/><circle cx="879" cy="274.8" r="3.5" fill="#fff" stroke="#505050" stroke-width="1.5"/><circle cx="29.6" cy="474.6" r="3.5" fill="#fff" stroke="#505050" stroke-width="1.5"/><circle cx="451.3" cy="474.6" r="3.5" fill="#fff" stroke="#505050" stroke-width="1.5"/><circle cx="879" cy="474.6" r="3.5" fill="#fff" stroke="#505050" stroke-width="1.5"/></g></svg>
</div>
</body>
</html>
